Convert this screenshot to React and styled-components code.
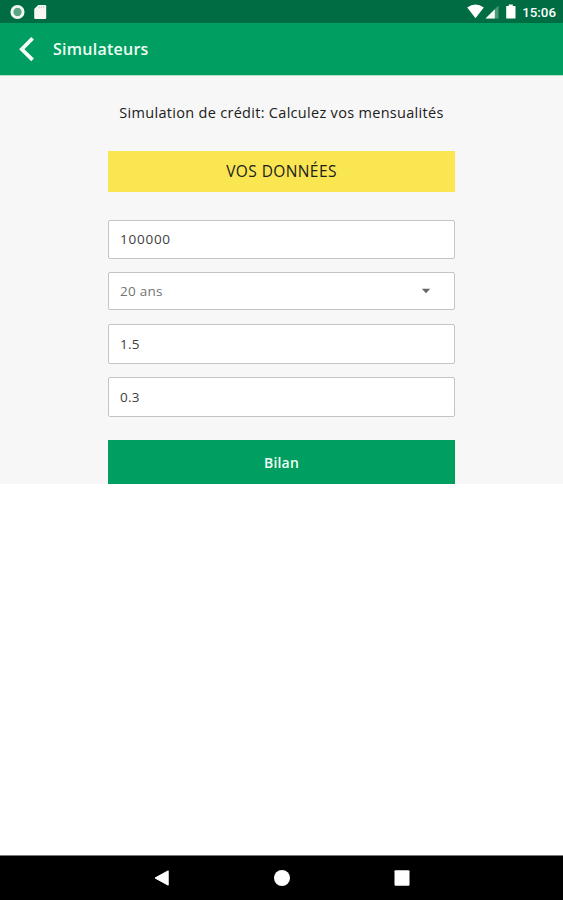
import React from "react";
import styled, { createGlobalStyle } from "styled-components";

const GlobalStyle = createGlobalStyle`
  * {
    box-sizing: border-box;
  }

  body {
    margin: 0;
    background-color: #ffffff;
  }
`;

/**
 * Credit simulator screen.
 *
 * @returns {string} - The component.
 */
function App() {
  return (
    <Screen>
      <GlobalStyle />
      <StatusBar>
        <svg width="50" height="23" viewBox="0 0 50 23">
          <circle cx="17.5" cy="12" r="5.6" fill="#5aa583" stroke="#f3f8f3" strokeWidth="2.9" />
          <path d="M38.2 5H45a1.2 1.2 0 0 1 1.2 1.2v11.6A1.2 1.2 0 0 1 45 19h-9.600a1.200 1.200 0 0 1-1.200-1.200V9z" fill="#f7f7f4" />
          <path d="M39 6.400v2M41.300 6.200v2M43.600 6.200v2" stroke="#bfd5c7" strokeWidth="1" />
        </svg>
        <StatusGroup>
          <svg width="52" height="23" viewBox="0 0 52 23">
            <path d="M0.200 7.500Q8.500 1.600 16.800 7.500L8.500 18.300z" fill="#ffffff" />
            <path d="M31.500 5.500v13h-13z" fill="#4d9a76" />
            <path d="M27.800 9.200v9.300h-9.300z" fill="#f4faf5" />
            <path d="M41.800 4.500h4V6h2.700v12.500h-9.300V6h2.600z" fill="#ffffff" />
          </svg>
          <Clock>15:06</Clock>
        </StatusGroup>
      </StatusBar>
      <Header>
        <BackButton aria-label="Retour">
          <svg width="18" height="28" viewBox="0 0 18 28">
            <path d="M14.600 3.200L3.800 14.300l10.800 10.600" fill="none" stroke="#f7fff9" strokeWidth="3.800" />
          </svg>
        </BackButton>
        <Title>Simulateurs</Title>
      </Header>
      <Content>
        <Intro>Simulation de crédit: Calculez vos mensualités</Intro>
        <SectionTitle>VOS DONNÉES</SectionTitle>
        <Form>
          <Field $height={39}>
            <Value $spacing="0.75px">100000</Value>
          </Field>
          <Field $height={38}>
            <Value $muted>20 ans</Value>
            <svg width="10" height="6" viewBox="0 0 10 6">
              <path d="M0.800 0.700h8.400L5 5.300z" fill="#686868" />
            </svg>
          </Field>
          <Field $height={40}>
            <Value>1.5</Value>
          </Field>
          <Field $height={40}>
            <Value>0.3</Value>
          </Field>
        </Form>
        <SubmitButton>Bilan</SubmitButton>
      </Content>
      <NavigationBar>
        <svg width="16" height="18" viewBox="0 0 16 18">
          <path d="M14.200 1.800v14.400L1 9z" fill="#ffffff" stroke="#ffffff" strokeLinejoin="round" />
        </svg>
        <svg width="16" height="18" viewBox="0 0 16 18">
          <circle cx="8" cy="9" r="8" fill="#ffffff" />
        </svg>
        <svg width="16" height="18" viewBox="0 0 16 18">
          <rect x="0.500" y="1.300" width="15" height="15.400" rx="1" fill="#ffffff" />
        </svg>
      </NavigationBar>
    </Screen>
  );
}

const Screen = styled.div`
  display: flex;
  flex-direction: column;
  height: 100vh;
  font-family: "Open Sans", "Noto Sans", sans-serif;
  color: #202020;
`;

const StatusBar = styled.div`
  /* StatusBar styling */
  display: flex;
  justify-content: space-between;
  flex: none;
  height: 23px;
  background-color: #006c43;
`;

const StatusGroup = styled.div`
  display: flex;
  padding-right: 7px;
`;

const Clock = styled.div`
  width: 37px;
  font-family: Roboto, sans-serif;
  font-size: 13.3px;
  font-weight: 500;
  line-height: 25px;
  text-align: right;
  white-space: nowrap;
  color: #ffffff;
`;

const Header = styled.div`
  /* Header styling */
  display: flex;
  align-items: center;
  flex: none;
  height: 52px;
  padding-left: 18px;
  background-color: #009e60;
`;

const BackButton = styled.button`
  display: flex;
  width: 35px;
  padding: 0;
  border: 0;
  background: none;
`;

const Title = styled.div`
  font-size: 16px;
  font-weight: 600;
  line-height: 22px;
  letter-spacing: 0.25px;
  color: #effff5;
`;

const Content = styled.div`
  /* Content styling */
  display: flex;
  flex-direction: column;
  align-items: center;
  flex: none;
  height: 409px;
  padding-top: 27px;
  border-top: 1px solid #b5dfcb;
  background-color: #f7f7f7;
`;

const Intro = styled.div`
  font-size: 14.5px;
  line-height: 20px;
  letter-spacing: 0.3px;
  white-space: nowrap;
`;

const SectionTitle = styled.div`
  /* SectionTitle styling */
  width: 347px;
  height: 41px;
  margin-top: 28px;
  font-size: 15.5px;
  line-height: 40px;
  letter-spacing: 0.4px;
  text-align: center;
  background-color: #fae650;
`;

const Form = styled.div`
  display: flex;
  flex-direction: column;
  row-gap: 13.6px;
  width: 347px;
  margin-top: 28px;
`;

const Field = styled.div`
  /* Field styling */
  display: flex;
  align-items: center;
  justify-content: space-between;
  height: ${({ $height }) => $height}px;
  padding: 0 23px 0 11px;
  border: 1px solid #c4c4c4;
  border-radius: 2px;
  background-color: #ffffff;
`;

const Value = styled.div`
  font-size: 13.5px;
  line-height: 18px;
  letter-spacing: ${({ $spacing }) => $spacing || "0.25px"};
  color: ${({ $muted }) => ($muted ? "#747474" : "#404040")};
`;

const SubmitButton = styled.button`
  /* SubmitButton styling */
  width: 347px;
  height: 44px;
  margin-top: 23px;
  padding: 0;
  border: 0;
  font-family: inherit;
  font-size: 14px;
  font-weight: 600;
  letter-spacing: 0.2px;
  color: #effff5;
  background-color: #009e60;
`;

const NavigationBar = styled.div`
  /* NavigationBar styling */
  display: flex;
  align-items: center;
  justify-content: center;
  column-gap: 104px;
  height: 45px;
  margin-top: auto;
  border-top: 1px solid #777777;
  background-color: #000000;
`;

export default App;
